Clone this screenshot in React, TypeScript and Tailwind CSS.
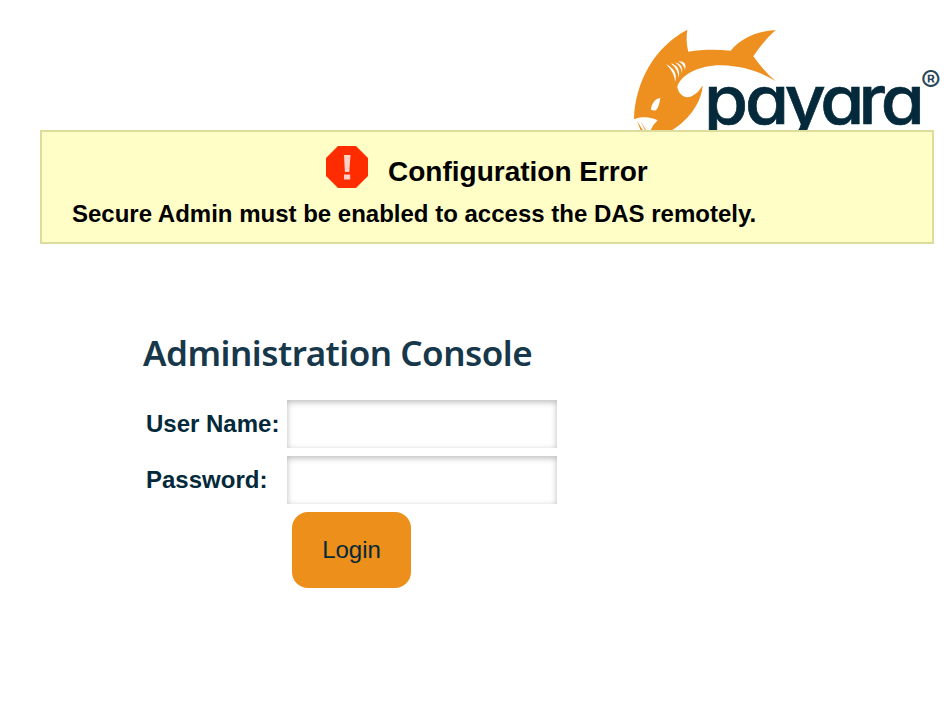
function Logo() {
  return (
    <svg width="328" height="115" viewBox="0 0 984 345" className="block" role="img" aria-label="Payara">
      <path
        fill="#ee901f"
        d="M42 309C46 205 100 97 202 44C198 70 200 90 205 110C245 104 285 103 332 107C364 69 410 49 467 45Q430 78 400 124Q428 164 467 199C418 169 370 153 304 151C238 150 180 181 172 216C176 238 193 251 212 245C231 237 241 223 248 211C246 255 212 312 157 345H54Z"
      />
      <path fill="#fff" d="M47 311C70 303 92 306 113 316Q99 329 91 347L79 347L61 317L75 346H69L51 318L62 346H53L41 313Z" />
      <path fill="#fff" d="M93 284C94 266 104 252 121 248C119 263 116 276 108 286Q100 287 93 284Z" />
      <path
        fill="#fff"
        d="M138 148Q176 166 165 202Q165 174 138 148ZM152 145Q183 153 176 189Q175 164 152 145ZM165 142Q192 149 186 175Q185 157 165 142ZM175 139Q203 138 195 166Q193 149 175 139Z"
      />
      <text
        x="238 354 466 567 675 738"
        y="326"
        transform="scale(1.06 1)"
        fill="#03293a"
        stroke="#03293a"
        strokeWidth="2"
        fontSize="202"
        className="font-['Inter',sans-serif] font-medium [font-feature-settings:'cv11']"
      >
        payara
      </text>
      <text x="902" y="231" fill="#294857" fontSize="90" className="font-['Inter',sans-serif]">
        ®
      </text>
    </svg>
  );
}

function ErrorIcon() {
  return (
    <svg width="42" height="42" viewBox="0 0 42 42" className="block">
      <path d="M12 0H30L42 12V30L30 42H12L0 30V12Z" fill="#ff2c00" />
      <path d="M18 9H24.5L23.3 26H18.9Z" fill="#ffd0c5" />
      <rect x="18" y="28.5" width="6.2" height="5" fill="#ffd0c5" />
    </svg>
  );
}

const field =
  "block h-12 w-[270px] bg-white px-2 text-2xl outline-none shadow-[inset_0_2px_6px_rgba(0,0,0,0.28)]";

export default function App() {
  return (
    <div className="h-[704px] w-[948px] overflow-hidden bg-white font-['Liberation_Sans',Arial,sans-serif] text-[#03293a]">
      <header className="flex h-[130px] justify-end pt-[15px]">
        <Logo />
      </header>
      <section className="ml-10 h-[114px] w-[894px] border-2 border-[#dcdc9c] bg-[#fffec6] text-black">
        <div className="flex pt-[14px] pl-[284px]">
          <ErrorIcon />
          <h1 className="ml-5 pt-[10px] text-[28px] leading-8 font-bold whitespace-nowrap">Configuration Error</h1>
        </div>
        <p className="mt-3 pl-[30px] text-2xl leading-7 font-bold whitespace-nowrap">
          Secure Admin must be enabled to access the DAS remotely.
        </p>
      </section>
      <main className="pt-[85px] pl-[143px]">
        <h2 className="h-[71px] pt-[1px] font-['Noto_Sans',sans-serif] text-[35px] leading-[46px] font-semibold tracking-[-0.5px] whitespace-nowrap text-[#17384a]">
          Administration Console
        </h2>
        <form className="grid grid-cols-[141px_270px] items-center gap-y-2 pl-[3px] text-2xl">
          <label htmlFor="user" className="font-bold whitespace-nowrap">User Name:</label>
          <input id="user" className={field} />
          <label htmlFor="password" className="font-bold">Password:</label>
          <input id="password" type="password" className={field} />
          <button type="button" className="col-start-2 ml-[5px] h-[76px] w-[119px] rounded-2xl bg-[#ec8f1b]">
            Login
          </button>
        </form>
      </main>
    </div>
  );
}
